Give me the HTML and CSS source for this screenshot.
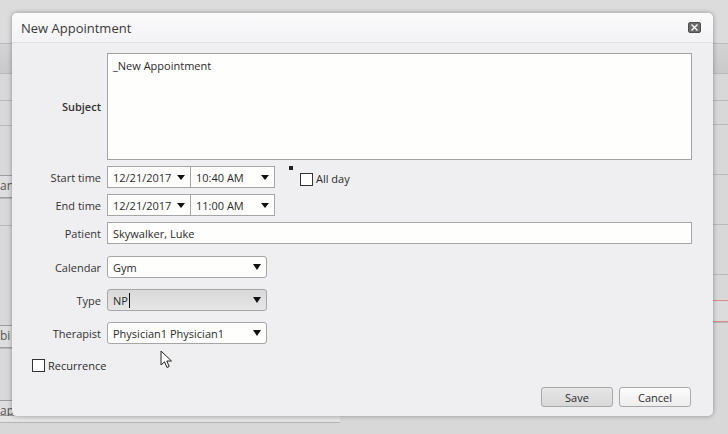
FILE: index.html
```html
<!DOCTYPE html>
<html lang="en">
<head>
    <meta charset="UTF-8">
    <title>New Appointment</title>
    <link rel="stylesheet" href="styles.css">
</head>
<body>
    <!-- scheduler behind the dialog -->
    <div class="backdrop">
        <div class="strip strip-left">
            <div class="cell h30"></div>
            <div class="cell h27"></div>
            <div class="cell h25"></div>
            <div class="cell h50"></div>
            <div class="cell h23 boxed"><span>an</span></div>
            <div class="cell h27"></div>
            <div class="cell h100"></div>
            <div class="cell h23 boxed"><span>bi</span></div>
            <div class="cell h52"></div>
            <div class="cell h16 boxed"><span>ap</span></div>
        </div>
        <div class="strip strip-right">
            <div class="cell h30"></div>
            <div class="cell h27"></div>
            <div class="cell h24"></div>
            <div class="cell h50"></div>
            <div class="cell h50"></div>
            <div class="cell h50"></div>
            <div class="cell h26"></div>
            <div class="cell h22 busy"></div>
            <div class="cell h50"></div>
        </div>
        <div class="scrollbar"></div>
    </div>

    <div class="dialog">
        <div class="dialog-title">
            <span>New Appointment</span>
            <button class="close" aria-label="Close">
                <svg width="7" height="7" viewBox="0 0 7 7"><path d="M0.5 0.5L6.5 6.5M6.5 0.5L0.5 6.5" stroke="#fff" stroke-width="1.3"/></svg>
            </button>
        </div>
        <div class="dialog-body">
            <div class="form-row subject-row">
                <label class="strong">Subject</label>
                <div class="textarea">_New Appointment</div>
            </div>
            <div class="form-row">
                <label>Start time</label>
                <div class="inline">
                    <div class="field date">12/21/2017<i class="arrow"></i></div>
                    <div class="field time">10:40 AM<i class="arrow"></i></div>
                    <span class="marker"></span>
                    <span class="checkbox"></span>
                    <span class="check-label">All day</span>
                </div>
            </div>
            <div class="form-row">
                <label>End time</label>
                <div class="inline">
                    <div class="field date">12/21/2017<i class="arrow"></i></div>
                    <div class="field time">11:00 AM<i class="arrow"></i></div>
                </div>
            </div>
            <div class="form-row patient-row">
                <label>Patient</label>
                <div class="field wide">Skywalker, Luke</div>
            </div>
            <div class="form-row select-row">
                <label>Calendar</label>
                <div class="select">Gym<i class="arrow"></i></div>
            </div>
            <div class="form-row select-row">
                <label>Type</label>
                <div class="select active">NP<span class="caret"></span><i class="arrow"></i></div>
            </div>
            <div class="form-row select-row">
                <label>Therapist</label>
                <div class="select">Physician1 Physician1<i class="arrow"></i></div>
            </div>
            <div class="recurrence">
                <span class="checkbox"></span>
                <span class="check-label">Recurrence</span>
            </div>
            <div class="actions">
                <button class="btn save">Save</button>
                <button class="btn">Cancel</button>
            </div>
        </div>
        <svg class="pointer" width="13" height="20" viewBox="0 0 13 20">
            <path d="M1 1L1 15L4.5 11.8L7 17.5L9.2 16.5L6.8 11L11.5 11Z" fill="#fff" stroke="#222" stroke-width="1" stroke-linejoin="round"/>
        </svg>
    </div>
</body>
</html>
```

FILE: styles.css
```css
body {
    margin: 0;
    width: 728px;
    height: 434px;
    overflow: hidden;
    background-color: #dadada;
    font-family: "Open Sans", "Noto Sans", sans-serif;
    font-size: 11px;
    color: #2b2b2b;
    position: relative;
}

.backdrop {
    position: absolute;
    inset: 0;
    background: linear-gradient(#dcdcdc 0, #dcdcdc 43px, #d4d4d4 43px, #c9c9c9 73px, #d8d8d8 73px);
}

.strip {
    position: absolute;
    top: 43px;
    display: flex;
    flex-direction: column;
}

.strip-left {
    left: 0;
    width: 14px;
}

.strip-right {
    right: 0;
    width: 16px;
}

.strip .cell {
    box-sizing: border-box;
    border-top: 1px solid #b9b9b9;
    position: relative;
}

.h16 { height: 16px; }
.h22 { height: 22px; }
.h23 { height: 23px; }
.h24 { height: 24px; }
.h25 { height: 25px; }
.h26 { height: 26px; }
.h27 { height: 27px; }
.h30 { height: 30px; }
.h50 { height: 50px; }
.h52 { height: 52px; }
.h100 { height: 100px; }

.strip .cell.boxed {
    background: #dedede;
    border-top-color: #9d9d9d;
    border-bottom: 1px solid #9d9d9d;
}

.strip .cell.busy {
    border-top: 1px solid #d98c8c;
    border-bottom: 1px solid #d98c8c;
    background: #dcdcdc;
}

.strip .cell span {
    position: absolute;
    left: 0;
    top: 3px;
    font-size: 12px;
    line-height: 14px;
    color: #555;
}

.scrollbar {
    position: absolute;
    left: 0;
    width: 340px;
    top: 416px;
    height: 6px;
    background: #e4e4e4;
    border-bottom: 1px solid #b4b4b4;
}

.dialog {
    position: absolute;
    left: 12px;
    top: 13px;
    width: 701px;
    height: 403px;
    background-color: #efeff1;
    border-radius: 5px;
    box-shadow: 0 0 5px rgba(0, 0, 0, 0.35);
    display: flex;
    flex-direction: column;
}

.dialog-title {
    height: 30px;
    box-sizing: border-box;
    padding: 0 12px 0 9px;
    display: flex;
    align-items: center;
    justify-content: space-between;
    background: linear-gradient(#fbfbfc, #f3f3f6);
    border-bottom: 1px solid #e2dde3;
    border-radius: 5px 5px 0 0;
    font-size: 13px;
    color: #3a3a3a;
}

.close {
    width: 13px;
    height: 11px;
    padding: 0;
    border: 1px solid #4f4f4f;
    border-radius: 2px;
    background: #6a6a6a;
    display: flex;
    align-items: center;
    justify-content: center;
}

.dialog-body {
    flex: 1;
    padding: 10px 21px 9px 0;
    display: flex;
    flex-direction: column;
}

.form-row {
    display: grid;
    grid-template-columns: 89px 1fr;
    column-gap: 6px;
    align-items: center;
    margin-bottom: 6px;
}

.form-row label {
    text-align: right;
    color: #333;
}

.form-row label.strong {
    font-weight: 600;
}

.textarea {
    height: 107px;
    box-sizing: border-box;
    border: 1px solid #a3a3a3;
    background: #fefefd;
    padding: 4px 5px;
    line-height: 16px;
}

.inline {
    display: flex;
    align-items: center;
}

.field {
    height: 22px;
    box-sizing: border-box;
    border: 1px solid #a6a6a6;
    background: #fefefd;
    padding: 0 5px;
    display: flex;
    align-items: center;
    position: relative;
}

.field.date {
    width: 84px;
}

.field.time {
    width: 85px;
    margin-left: -1px;
}

.patient-row {
    margin-bottom: 12px;
}

.arrow {
    position: absolute;
    right: 5px;
    top: 50%;
    margin-top: -2px;
    width: 0;
    height: 0;
    border-left: 4px solid transparent;
    border-right: 4px solid transparent;
    border-top: 5px solid #111;
}

.marker {
    width: 4px;
    height: 4px;
    background: #222;
    align-self: flex-start;
    margin: 0 0 0 14px;
}

.checkbox {
    width: 11px;
    height: 11px;
    border: 1px solid #333;
    background: #fff;
    display: inline-block;
}

.inline .checkbox {
    margin: 4px 0 0 7px;
}

.inline .check-label {
    margin: 3px 0 0 3px;
}

.select-row {
    margin-bottom: 11px;
}

.select {
    width: 160px;
    height: 22px;
    box-sizing: border-box;
    border: 1px solid #a6a6a6;
    border-radius: 3px;
    background: #fefefd;
    padding: 0 5px;
    display: flex;
    align-items: center;
    position: relative;
}

.select .arrow {
    right: 5px;
    border-left-width: 4px;
    border-right-width: 4px;
    border-top-width: 6px;
    margin-top: -3px;
}

.select.active {
    background: linear-gradient(#d9d9d9, #e6e6e6);
}

.caret {
    width: 1px;
    height: 15px;
    background: #111;
    margin-left: 1px;
}

.recurrence {
    display: flex;
    align-items: center;
    gap: 3px;
    margin: 3px 0 0 20px;
}

.actions {
    margin-top: auto;
    display: flex;
    justify-content: flex-end;
    gap: 6px;
    padding-right: 1px;
}

.btn {
    width: 72px;
    height: 20px;
    padding: 0;
    border: 1px solid #a8a8a8;
    border-radius: 3px;
    background: linear-gradient(#fcfcfc, #ededed);
    font-family: "Open Sans", "Noto Sans", sans-serif;
    font-size: 11px;
    color: #2b2b2b;
}

.btn.save {
    background: linear-gradient(#e6e6e6, #d8d8d8);
}

.pointer {
    position: absolute;
    left: 148px;
    top: 337px;
}
```
